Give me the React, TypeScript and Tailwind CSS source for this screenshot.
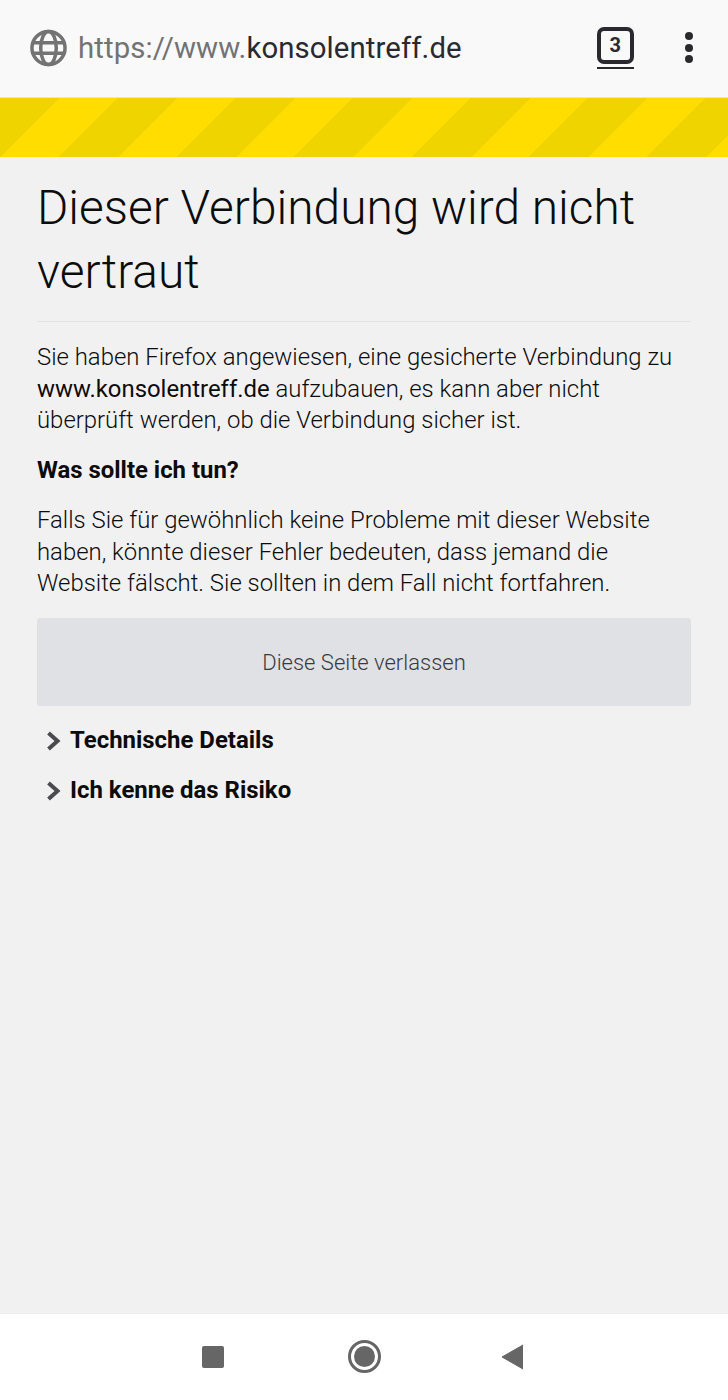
import React from "react";

const Chevron = () => (
  <svg width="16" height="20" viewBox="0 0 16 20" className="shrink-0">
    <path d="M3.5 2 L12.5 10 L3.5 18" fill="none" stroke="#4a4a4f" strokeWidth="4" />
  </svg>
);

const App: React.FC = () => (
  <div className="flex h-[1400px] w-[728px] flex-col overflow-hidden bg-[#f1f1f1] font-['Roboto',sans-serif]">
    <header className="flex h-[98px] shrink-0 items-center border-b border-[#e4e4e4] bg-[#f9f9fa] pl-[30px]">
      <svg width="37" height="38" viewBox="0 0 38 38" className="mb-[2px] shrink-0">
        <g fill="none" stroke="#737373" strokeWidth="3.6">
          <circle cx="19" cy="19" r="17" />
          <ellipse cx="19" cy="19" rx="8" ry="17" />
          <path d="M2 13.5 H36 M2 24.5 H36" />
        </g>
      </svg>
      <p className="ml-[11px] text-[29.35px] tracking-[0.1px] text-[#737373]">
        https://www.<span className="text-[#2a2a2e]">konsolentreff.de</span>
      </p>
      <div className="ml-[135px] mb-[2px] flex w-[37px] flex-col">
        <div className="flex h-[37px] items-center justify-center rounded-[7px] border-4 border-[#2a2a2e] text-[20px] font-bold text-[#2a2a2e]">
          3
        </div>
        <div className="mt-[3px] h-[2px] bg-[#2a2a2e]" />
      </div>
      <div className="ml-[51px] mb-[2px] flex flex-col gap-[3.5px]">
        <span className="size-[8px] rounded-full bg-[#2a2a2e]" />
        <span className="size-[8px] rounded-full bg-[#2a2a2e]" />
        <span className="size-[8px] rounded-full bg-[#2a2a2e]" />
      </div>
    </header>

    <div className="h-[59px] shrink-0 bg-[repeating-linear-gradient(135deg,#f0d400_0,#f0d400_42.4px,#ffdd00_42.4px,#ffdd00_83.1px)]" />

    <main className="flex-1 px-[37px]">
      <h1 className="mt-[20px] border-b border-[#e2e2e2] pb-[17px] text-[47.85px] leading-[63.5px] font-light text-[#0c0c0d]">
        Dieser Verbindung wird nicht vertraut
      </h1>
      <p className="mt-[20px] text-[23.9px] leading-[31.5px] font-light text-[#0c0c0d]">
        Sie haben Firefox angewiesen, eine gesicherte Verbindung zu{" "}
        <span className="font-normal">www.konsolentreff.de</span> aufzubauen, es kann aber nicht überprüft
        werden, ob die Verbindung sicher ist.
      </p>
      <h2 className="mt-[18px] text-[23.9px] leading-[31.5px] font-bold text-[#0c0c0d]">Was sollte ich tun?</h2>
      <p className="mt-[19px] text-[23.9px] leading-[31.5px] font-light text-[#0c0c0d]">
        Falls Sie für gewöhnlich keine Probleme mit dieser Website haben, könnte dieser Fehler bedeuten, dass
        jemand die Website fälscht. Sie sollten in dem Fall nicht fortfahren.
      </p>
      <button className="mt-[18px] flex h-[88px] w-full items-center justify-center rounded-[3px] bg-[#e0e1e5] pt-[1px] text-[22px] font-light text-[#3a3a3e]">
        Diese Seite verlassen
      </button>
      <div className="mt-[19px] flex h-[32px] items-center gap-[9px] pl-[8px] text-[23.95px] font-bold text-[#0c0c0d]">
        <Chevron />
        Technische Details
      </div>
      <div className="mt-[18px] flex h-[32px] items-center gap-[9px] pl-[8px] text-[23.95px] font-bold text-[#0c0c0d]">
        <Chevron />
        Ich kenne das Risiko
      </div>
    </main>

    <nav className="relative flex h-[87px] shrink-0 items-center border-t border-[#ececec] bg-white pb-[1px]">
      <div className="ml-[202px] size-[22px] rounded-[2px] bg-[#666666]" />
      <div className="ml-[124px] flex size-[33px] items-center justify-center rounded-full border-[3px] border-[#666666]">
        <div className="size-[21px] rounded-full bg-[#666666]" />
      </div>
      <svg width="22" height="26" viewBox="0 0 22 26" className="ml-[120px]">
        <path d="M22 1 V25 L1 13 Z" fill="#666666" stroke="#666666" strokeLinejoin="round" />
      </svg>
    </nav>
  </div>
);

export default App;
